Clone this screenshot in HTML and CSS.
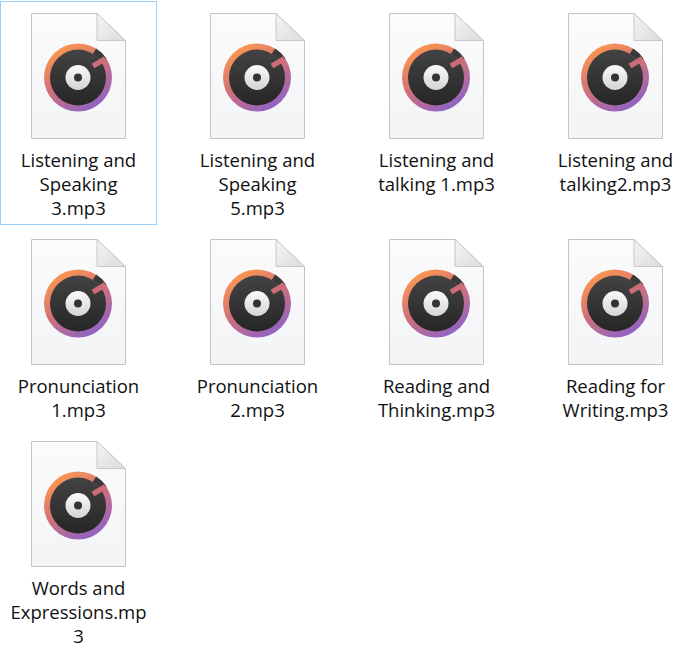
FILE: index.html
```html
<!DOCTYPE html>
<html lang="en">
<head>
  <meta charset="UTF-8">
  <title>Music folder</title>
  <link rel="stylesheet" href="styles.css">
</head>
<body>
  <svg class="defs" width="0" height="0">
    <defs>
      <linearGradient id="sheet" x1="0" y1="0" x2="0" y2="1">
        <stop offset="0" stop-color="#fbfbfc"/>
        <stop offset="1" stop-color="#f3f4f6"/>
      </linearGradient>
      <linearGradient id="fold" x1="0" y1="0" x2="1" y2="1">
        <stop offset="0" stop-color="#f4f4f4"/>
        <stop offset="1" stop-color="#dcdcdc"/>
      </linearGradient>
      <linearGradient id="ring" x1="0.15" y1="0.05" x2="0.7" y2="1">
        <stop offset="0" stop-color="#ff9a4d"/>
        <stop offset="0.5" stop-color="#d0707a"/>
        <stop offset="1" stop-color="#8d62c8"/>
      </linearGradient>
      <linearGradient id="disc" x1="0" y1="0" x2="0" y2="1">
        <stop offset="0" stop-color="#434343"/>
        <stop offset="1" stop-color="#262626"/>
      </linearGradient>
      <linearGradient id="label" x1="0" y1="0" x2="0" y2="1">
        <stop offset="0" stop-color="#fbfbfb"/>
        <stop offset="1" stop-color="#d4d4d4"/>
      </linearGradient>
      <symbol id="mp3" viewBox="0 0 95 126">
        <path d="M.5.5H66L94.5 27.5V125.500H.5Z" fill="url(#sheet)" stroke="#c4c4c4"/>
        <path d="M66 .5V27.500H94.500Z" fill="url(#fold)" stroke="#c8c8c8"/>
        <circle cx="47" cy="64.500" r="34" fill="url(#ring)"/>
        <path d="M63.430 38.210A31 31 0 0 1 72.700 47.170" stroke="#3a3a3a" stroke-width="6.500" fill="none"/>
        <circle cx="47" cy="64.500" r="28" fill="url(#disc)"/>
        <path d="M62 53L74.500 45.500" stroke="#cb6c78" stroke-width="5.500" fill="none"/>
        <circle cx="47" cy="64.500" r="12.500" fill="url(#label)"/>
        <circle cx="47" cy="64.500" r="4" fill="#333"/>
      </symbol>
    </defs>
  </svg>

  <div class="files">
    <div class="file selected">
      <svg class="file-icon"><use href="#mp3"/></svg>
      <div class="name">Listening and<br>Speaking<br>3.mp3</div>
    </div>
    <div class="file">
      <svg class="file-icon"><use href="#mp3"/></svg>
      <div class="name">Listening and<br>Speaking<br>5.mp3</div>
    </div>
    <div class="file">
      <svg class="file-icon"><use href="#mp3"/></svg>
      <div class="name">Listening and<br>talking 1.mp3</div>
    </div>
    <div class="file">
      <svg class="file-icon"><use href="#mp3"/></svg>
      <div class="name">Listening and<br>talking2.mp3</div>
    </div>
    <div class="file">
      <svg class="file-icon"><use href="#mp3"/></svg>
      <div class="name">Pronunciation<br>1.mp3</div>
    </div>
    <div class="file">
      <svg class="file-icon"><use href="#mp3"/></svg>
      <div class="name">Pronunciation<br>2.mp3</div>
    </div>
    <div class="file">
      <svg class="file-icon"><use href="#mp3"/></svg>
      <div class="name">Reading and<br>Thinking.mp3</div>
    </div>
    <div class="file">
      <svg class="file-icon"><use href="#mp3"/></svg>
      <div class="name">Reading for<br>Writing.mp3</div>
    </div>
    <div class="file">
      <svg class="file-icon"><use href="#mp3"/></svg>
      <div class="name">Words and<br>Expressions.mp<br>3</div>
    </div>
  </div>
</body>
</html>
```

FILE: styles.css
```css
html, body {
  overflow: hidden;
}

body {
  margin: 0;
  padding-top: 1px;
  background: white;
  font-family: 'Open Sans', sans-serif;
  color: #111;
}

.defs {
  position: absolute;
}

.files {
  display: grid;
  grid-template-columns: repeat(4, 157px);
  column-gap: 22px;
  row-gap: 2px;
  align-items: start;
}

.file {
  display: flex;
  flex-direction: column;
  align-items: center;
  box-sizing: border-box;
  padding: 11px 0 4px;
  border: 1px solid transparent;
}

.file.selected {
  border-color: #99d1ff;
}

.file-icon {
  width: 95px;
  height: 126px;
  margin-bottom: 9px;
}

.name {
  font-size: 18.500px;
  line-height: 24px;
  text-align: center;
  white-space: nowrap;
}
```
